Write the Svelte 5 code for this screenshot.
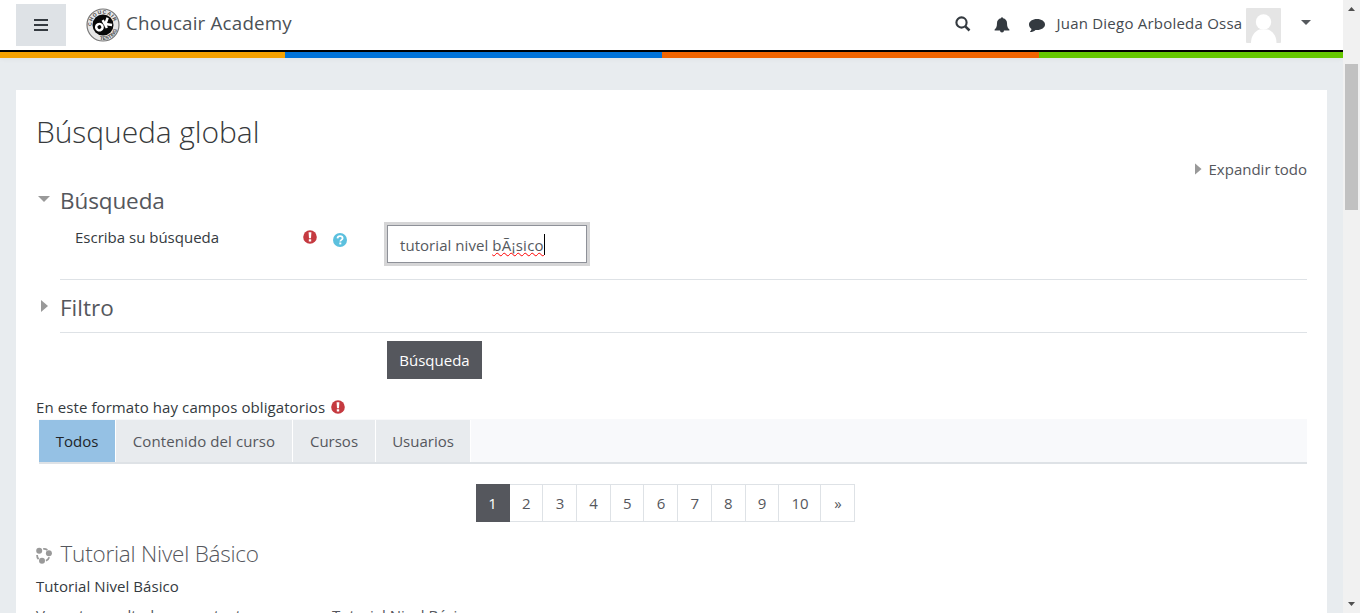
<script>
  const tabs = ['Todos', 'Contenido del curso', 'Cursos', 'Usuarios'];
  const pages = ['1', '2', '3', '4', '5', '6', '7', '8', '9', '10', '»'];
</script>

{#snippet required()}
  <svg class="req" width="14" height="14" viewBox="0 0 14 14">
    <circle cx="7" cy="7" r="6.8" fill="#c53a40" />
    <path d="M5.6 2.200h2.800l-.4 6H6zM5.800 9.200h2.400v2.300H5.800z" fill="#fff" />
  </svg>
{/snippet}

<div class="screen">
  <div class="page">
    <header>
      <button class="burger" aria-label="Menú">
        <svg width="14" height="12" viewBox="0 0 14 12"><path d="M0 1h14M0 6h14M0 11h14" stroke="#343a40" stroke-width="2" /></svg>
      </button>
      <svg class="logo" width="34" height="34" viewBox="0 0 34 34">
        <defs>
          <path id="ringtop" d="M5.900 19A11.300 11.300 0 1 1 28.100 19" />
          <path id="ringbottom" d="M9 29.700A15 15 0 0 0 31.500 20.500" />
        </defs>
        <circle cx="17" cy="17" r="16" fill="#e6e6e6" stroke="#777" stroke-width="1.200" />
        <circle cx="17" cy="17" r="10.500" fill="#090909" />
        <text class="ring"><textPath href="#ringtop" startOffset="1" textLength="33">CHOUCAIR</textPath></text>
        <text class="ring"><textPath href="#ringbottom" startOffset="5">TESTING</textPath></text>
        <g transform="rotate(-28 17 17)" fill="none" stroke="#fff" stroke-width="2.500">
          <circle cx="12.800" cy="17.200" r="3.200" />
          <path d="M19 12.500v9M24.500 12.800l-5 4.500 5.500 4" />
        </g>
      </svg>
      <span class="brand">Choucair Academy</span>
      <nav class="tools">
        <svg class="search" width="16" height="16" viewBox="0 0 16 16"><circle cx="6.500" cy="6.500" r="5.100" fill="none" stroke="#343a40" stroke-width="2.100" /><path d="M10.300 10.300l4.200 4.200" stroke="#343a40" stroke-width="2.500" /></svg>
        <svg class="bell" width="16" height="16" viewBox="0 0 16 16"><path d="M7 1.200a1 1 0 0 1 2 0c2.500.5 4 2.300 4 4.800 0 3.600.9 5.500 2.400 6.500v1H10a2 2 0 0 1-4 0H.6v-1C2.100 11.500 3 9.600 3 6c0-2.500 1.500-4.300 4-4.800z" fill="#343a40" /></svg>
        <svg class="chat" width="16" height="15" viewBox="0 0 16 15"><path d="M8 1c4.500 0 8 2.400 8 5.500S12.500 12 8 12l-1.500-.1C5 13.300 3.200 14 1.300 14.100c-.4 0-.4-.4-.1-.7.800-.7 1.200-1.500 1.300-2.500C.9 9.900 0 8.300 0 6.500 0 3.400 3.500 1 8 1z" fill="#343a40" /></svg>
        <span class="user">Juan Diego Arboleda Ossa</span>
        <svg class="avatar" width="35" height="35" viewBox="0 0 35 35"><rect width="35" height="35" rx="1" fill="#e5e5e5" /><circle cx="17.500" cy="14" r="7.700" fill="#fff" /><path d="M5 35c0-7 3.500-11.500 8.500-13.500h8.500c5 2 8.500 6.500 8.500 13.500z" fill="#fff" /></svg>
        <i class="caret"></i>
      </nav>
    </header>
    <div class="stripe"><i class="s1"></i><i class="s2"></i><i class="s3"></i><i class="s4"></i></div>
    <main>
      <h1>Búsqueda global</h1>
      <div class="expand"><i class="right"></i><a>Expandir todo</a></div>
      <section class="first">
        <div class="head"><i class="down"></i><h3>Búsqueda</h3></div>
        <div class="row">
          <span class="label">Escriba su búsqueda</span>
          {@render required()}
          <svg class="help" width="14" height="14" viewBox="0 0 14 14"><circle cx="7" cy="7" r="7" fill="#5bc0de" /><path d="M4.500 5.400C4.600 3.900 5.600 3.100 7.100 3.100s2.500.9 2.500 2.100c0 1.600-2.300 1.700-2.300 3.300" fill="none" stroke="#fff" stroke-width="1.800" /><path d="M6.300 9.500h2v1.900h-2z" fill="#fff" /></svg>
          <div class="input"><span class="txt">tutorial nivel <span class="wrong">bÃ¡sico</span></span><i class="cursor"></i></div>
        </div>
      </section>
      <section class="second">
        <div class="head"><i class="right"></i><h3 class="filter">Filtro</h3></div>
      </section>
      <button class="submit">Búsqueda</button>
      <div class="note"><span>En este formato hay campos obligatorios</span>{@render required()}</div>
      <div class="tabs">
        {#each tabs as tab, i}<a class="tab t{i}"><span>{tab}</span></a>{/each}
      </div>
      <div class="pages">
        {#each pages as p, i}<a class:active={i === 0} class:wide={p === '10'} class:next={p === '»'}>{p}</a>{/each}
      </div>
      <div class="result">
        <svg width="16" height="17" viewBox="0 0 16 17"><g fill="#999"><circle cx="3.200" cy="3.800" r="3" /><circle cx="12.900" cy="6.200" r="3" /><circle cx="6" cy="13.700" r="3" /></g><path d="M7.200 1.900c1.700-.2 3 .2 4.200 1M1.100 8c-.1 1.700.4 3 1.500 4.200M10 13.700c1.700-.8 2.700-2 3.200-3.500" fill="none" stroke="#999" stroke-width="1.800" /></svg>
        <h4>Tutorial Nivel Básico</h4>
      </div>
      <div class="desc">Tutorial Nivel Básico</div>
      <div class="meta"><a class="ctx">Ver este resultado en contexto</a><a class="in">Tutorial Nivel Básico</a></div>
    </main>
  </div>
  <aside><i class="up"></i><i class="thumb"></i><i class="dn"></i></aside>
</div>

<style>
  :global(body) { margin: 0; overflow: hidden; }
  * { box-sizing: border-box; }
  .screen { display: flex; width: 1360px; height: 613px; overflow: hidden; font: 15px/24px "Open Sans", "Noto Sans", sans-serif; color: #343a40; }
  .page { width: 1343px; background: #e8ecef; overflow: hidden; }
  svg { display: block; flex: none; }
  header { height: 52px; background: #fff; border-bottom: 2px solid #000; display: flex; }
  .burger { width: 50px; height: 42px; margin: 4px 0 0 16px; border: 0; background: #dee2e6; display: grid; place-items: center; padding: 0; }
  .logo { margin: 8px 0 0 20px; }
  .ring { font: bold 5px "Liberation Sans", sans-serif; fill: #444; }
  .brand { margin: 9px 0 0 6px; font-size: 18.750px; line-height: 28px; white-space: nowrap; color: #4c5156; letter-spacing: .2px; }
  .tools { margin-left: auto; display: flex; height: 50px; }
  .search { margin: 16px 23.500px 0 0; }
  .bell { margin: 17px 19px 0 0; }
  .chat { margin: 18px 11.500px 0 0; }
  .user { width: 189.500px; margin-top: 11px; white-space: nowrap; letter-spacing: .22px; color: #454a4f; }
  .avatar { margin-top: 8px; }
  .caret { margin: 20px 32px 0 20px; width: 10px; height: 5px; background: #55595d; clip-path: polygon(0 0, 100% 0, 50% 100%); }
  .stripe { display: flex; height: 6px; box-shadow: 0 2px 4px rgba(0,0,0,.03); }
  .s1 { width: 285px; background: #f5a100; }
  .s2 { width: 377px; background: #0073d9; }
  .s3 { width: 377px; background: #f06400; }
  .s4 { flex: 1; background: #65c700; }
  main { margin: 32px 16px 0; background: #fff; padding: 22px 20px 0; height: 560px; }
  h1, h3, h4 { margin: 0; font-weight: 300; white-space: nowrap; }
  h1 { font-size: 30px; line-height: 40px; color: #373a3c; letter-spacing: -.08px; }
  .expand { display: flex; justify-content: flex-end; margin-top: 5px; }
  .expand a, .tab, .pages a { color: #55575d; }
  .right { width: 7px; height: 12px; background: #999; clip-path: polygon(0 0, 100% 50%, 0 100%); }
  .expand .right { margin: 6px 7px 0 0; }
  .down { width: 12px; height: 6px; background: #999; clip-path: polygon(0 0, 100% 0, 50% 100%); }
  section { position: relative; }
  section::after { content: ""; position: absolute; left: 24px; right: 0; bottom: 0; height: 1px; background: #dee2e6; }
  .first { height: 99px; }
  .second { height: 53px; }
  .head { display: flex; height: 40px; align-items: flex-start; }
  .first .down { margin: 15px 10px 0 2px; }
  .second .right { margin: 20px 12px 0 5px; }
  h3 { font-size: 22.500px; line-height: 40px; font-weight: 400; color: #55575d; letter-spacing: -.1px; }
  .filter { margin-top: 8px; letter-spacing: 0; }
  .row { display: flex; height: 44px; }
  .label { margin: 4px 0 0 39px; width: 228px; white-space: nowrap; }
  .row .req { margin-top: 9px; }
  .help { margin: 12px 0 0 16px; }
  .input { margin: 4px 0 0 40px; width: 200px; height: 38px; border: 1px solid #8e9198; box-shadow: 0 0 0 3px #d5d5d6; padding: 7px 0 0 12px; display: flex; color: #55595e; flex: none; }
  .txt { white-space: nowrap; letter-spacing: .05px; }
  .wrong { letter-spacing: .28px; text-decoration: underline wavy #f00 1px; text-underline-offset: 1px; text-decoration-skip-ink: none; }
  .cursor { width: 1px; height: 21px; background: #000; margin-top: 1px; }
  .submit { display: block; width: 95px; height: 38px; margin: 8px 0 0 351px; border: 0; padding: 0; background: #55575d; color: #fff; font: inherit; }
  .note { display: flex; height: 40px; padding-top: 16px; }
  .note span { width: 294.500px; white-space: nowrap; letter-spacing: .09px; }
  .note .req { margin-top: 5px; }
  .tabs { display: flex; height: 45px; margin-left: 3px; background: #f8f9fb; border-bottom: 2px solid #dee2e6; padding-top: 1px; }
  .tab { background: #e8ebee; border-right: 1px solid #fff; line-height: 42px; text-align: center; white-space: nowrap; height: 42px; }
  .t0 { width: 77px; background: #95c1e4; color: #212529; }
  .t1 { width: 177px; letter-spacing: .1px; }
  .t2 { width: 83px; }
  .t3 { width: 95px; }
  .pages { display: flex; margin: 20px 0 0 440px; height: 38px; }
  .pages a { width: 33.700px; border: 1px solid #dee2e6; border-left: 0; text-align: center; line-height: 37px; padding-left: .5px; }
  .pages .active { background: #55575d; border-color: #55575d; color: #fff; }
  .pages .wide { width: 42.200px; }
  .pages .next { width: 34px; padding: 0; }
  .result { display: flex; margin-top: 14px; height: 38px; }
  .result svg { margin: 11px 8.500px 0 0; }
  h4 { font-size: 22.500px; line-height: 36px; color: #55575d; letter-spacing: -.22px; }
  .desc { letter-spacing: .06px; }
  .meta { display: flex; margin-top: 5px; color: #55575d; }
  .ctx { width: 296px; white-space: nowrap; }
  aside { width: 17px; background: #f1f1f1; display: flex; flex-direction: column; align-items: center; }
  .up { width: 7px; height: 4px; margin-top: 7px; background: #505050; clip-path: polygon(50% 0, 100% 100%, 0 100%); }
  .thumb { width: 13px; height: 146px; margin-top: 53px; background: #c1c1c1; }
  .dn { width: 7px; height: 4px; margin: auto 0 7px; background: #505050; clip-path: polygon(0 0, 100% 0, 50% 100%); }
</style>
